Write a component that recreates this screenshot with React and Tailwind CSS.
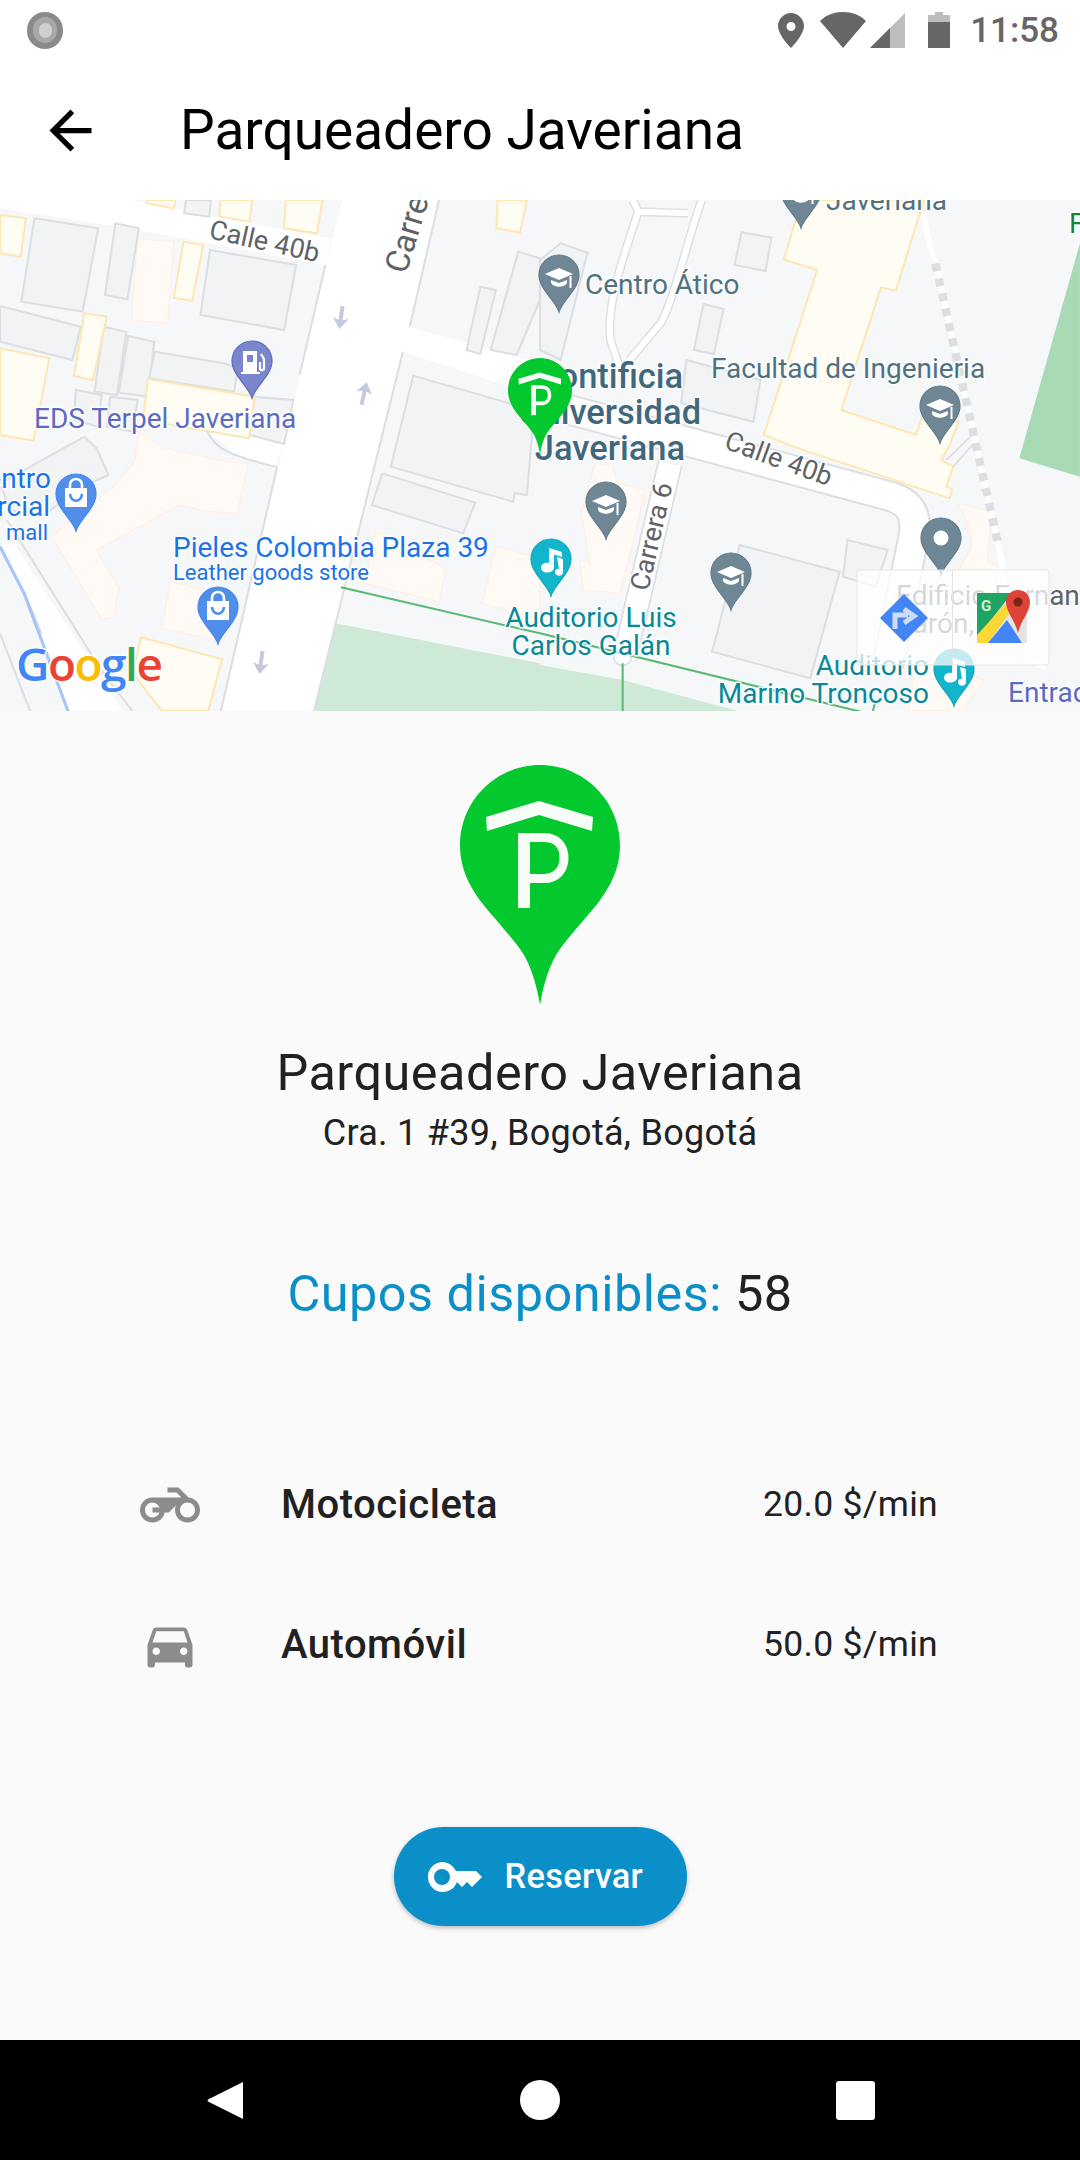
import React from "react";

const BLD = { fill: "#f1f3f5", stroke: "#dcdee1", strokeWidth: 6 };
const YEL = { fill: "#fffcf3", stroke: "#fde7b2", strokeWidth: 6 };
const PEA = { fill: "#fffaf5", stroke: "#fff0e2", strokeWidth: 4 };

const leftBld = ["100,55 285,85 240,335 62,305","335,70 403,85 370,298 305,285","0,318 235,380 210,480 0,425","610,150 860,195 825,390 582,345","300,380 367,395 340,585 275,575","372,408 448,425 430,590 345,578","450,455 650,490 690,505 680,575 433,535","220,570 295,585 285,680 215,660","320,590 400,600 385,695 310,680","1505,155 1568,175 1568,300 1500,465 1425,450","1395,260 1440,270 1395,462 1355,450","1200,527 1480,610 1550,640 1530,885 1495,880 1490,905 1135,800","1110,820 1380,908 1345,1000 1080,915","540,0 612,0 608,50 535,40","0,850 245,710 280,745 300,790 315,825 240,860 120,950 30,930","730,590 852,600 825,732 725,705"];
const leftYel = ["0,45 75,55 60,170 0,160","430,0 510,0 505,25 425,10","640,0 732,0 725,65 637,50","830,0 937,0 920,100 825,85","245,340 310,350 270,540 215,528","533,125 590,135 558,303 505,293","0,445 143,475 97,722 0,705","430,537 740,590 723,715 415,660","1445,0 1530,0 1510,98 1442,85","410,1312 645,1378 605,1532 470,1532 385,1420"];
const leftPea = ["400,115 505,125 487,370 382,360","405,700 480,745 655,785 720,790 690,940 605,935 520,915 280,1050 345,1165 330,1250 295,1258 150,1010 330,860 390,785","495,1145 680,1190 650,1325 470,1285","1090,995 1295,1105 1275,1205 1060,1150","1440,1040 1568,1075 1568,1255 1400,1210"];

const rightBld = ["60,130 138,158 60,480 0,450 0,180","475,312 533,327 505,462 447,450","585,97 672,113 655,213 565,195","425,480 640,540 620,665 410,610","580,1035 870,1115 785,1435 500,1355","893,1020 1010,1050 975,1160 880,1130"];
const rightYel = ["760,0 1115,0 1033,272 990,262 875,630 1092,705 1110,650 1215,665 1190,735 1165,780 1200,800 1180,860 1197,870 1190,895 750,745 650,705 805,210 708,178"];
const rightPea = ["160,790 210,800 225,850 305,870 265,1050 230,1180 125,1170 115,1080 145,1090 120,940","1215,910 1310,935 1300,1090 1325,1095 1320,1200 1210,1120 1255,1040 1250,990","1090,1380 1290,1440 1230,1532 1070,1532"];

function Poly({ list, style }) {
  return list.map((p, i) => <polygon key={i} points={p} {...style} strokeLinejoin="miter" />);
}

function Arrow({ x, y, r }) {
  return (
    <g transform={`translate(${x} ${y}) rotate(${r})`}>
      <path d="M-2 -11 L2 -11 L2 3 L8 1 L0 12 L-8 1 L-2 3 Z" fill="#c5c9df" />
    </g>
  );
}

const icons = {
  cap: (
    <g fill="#fff">
      <path d="M0 13 L-14 19 L0 25 L14 19 Z" />
      <path d="M-8 25 V28 C-5 33 5 33 8 28 V25 L0 28 Z" />
      <rect x="10.5" y="21" width="2" height="12" />
    </g>
  ),
  bag: (
    <g>
      <path d="M-11 14 H11 L11 33 H-11 Z" fill="#fff" />
      <path d="M-6 14 V11 C-6 3 6 3 6 11 V14" fill="none" stroke="#fff" strokeWidth="2.6" />
      <path d="M-6 20 C-5 29 5 29 6 20" fill="none" stroke="#4f8ee9" strokeWidth="2.6" />
    </g>
  ),
  fuel: (
    <g fill="#fff">
      <path d="M-9 10 H5 V31 H8 V33 H-11 V31 H-9 Z M-5 14 V21 H1 V14 Z" fillRule="evenodd" />
      <path d="M9 13 L12 18 V27 C12 30 8 30 8 27 V22 H7" fill="none" stroke="#fff" strokeWidth="2.2" />
    </g>
  ),
  music: (
    <g fill="#fff">
      <path d="M-2 9 L11 13 V18 L3 15.5 V29 C3 34 -9 36 -10 29 C-10 24 -5 23 -2 24 Z" />
      <path d="M6 18 L12 20 V33 C12 38 4 38 4 33 C4 30 7 29 8 30 Z" />
    </g>
  ),
  dot: <circle cx="0" cy="20" r="7.5" fill="#fff" />,
};

function Pin({ x, y, color, edge, icon }) {
  return (
    <g transform={`translate(${x} ${y})`}>
      <path d="M0 57 C-3 46 -20 34 -20 20 A20 20 0 1 1 20 20 C20 34 3 46 0 57 Z" fill={color} stroke={edge} strokeWidth="1.2" />
      {icons[icon]}
    </g>
  );
}

function L({ x, y, size = 28, color, weight = 400, anchor = "start", rot, children }) {
  return (
    <text
      x={x}
      y={y}
      fontSize={size}
      fontWeight={weight}
      fontFamily="Roboto, sans-serif"
      fill={color}
      textAnchor={anchor}
      stroke="#ffffff"
      strokeWidth="3"
      strokeOpacity="0.85"
      paintOrder="stroke"
      transform={rot !== undefined ? `rotate(${rot} ${x} ${y})` : undefined}
    >
      {children}
    </text>
  );
}

function PinShape() {
  return (
    <>
      <path d="M80 0 C124 0 160 36 160 80 C160 104 150 122 138 138 C122 158 106 174 96 190 C88 204 83 222 80 240 C77 222 72 204 64 190 C54 174 38 158 22 138 C10 122 0 104 0 80 C0 36 36 0 80 0 Z" fill="#04c92e" />
      <path d="M26 52 L79 36 L133 52 L132 66 L79 50 L27 66 Z" fill="#f6fcf6" />
      <path d="M58 68 H70 V143 H58 Z" fill="#f6fcf6" />
      <path d="M64 72.5 H84 C98 72.5 104 82 104 93 C104 104 97 113.5 84 113.5 H64" fill="none" stroke="#f6fcf6" strokeWidth="9" />
    </>
  );
}

function MapView() {
  const slate = "#6f8795";
  const slateEdge = "#5f7a89";
  const labelSlate = "#4f7282";
  const teal = "#078a96";
  const purple = "#5c6bc0";
  const blue = "#1a73e8";
  const road = "#5f6368";
  return (
    <svg viewBox="0 0 1080 511" className="block w-[1080px] h-[511px] bg-[#f5f7f9]">
      <g transform="scale(0.34435 0.33333)">
        <polygon points="975,1270 1568,1390 1568,1540 910,1540" fill="#ceead6" />
        <Poly list={leftPea} style={PEA} />
        <polygon points="0,0 380,0 960,115 945,195 400,90 0,25" fill="#fff" />
        <polygon points="995,0 1275,0 1190,380 1568,490 1568,590 1170,455 910,1540 640,1540 870,530 945,195" fill="#fff" />
        <polygon points="720,700 830,730 870,530 890,540 800,800 680,760 610,700" fill="#fff" />
        <polygon points="5,1030 40,1030 360,1540 205,1540 70,1180" fill="#fff" />
        <Poly list={leftBld} style={BLD} />
        <Poly list={leftYel} style={YEL} />
        <path d="M945 195 L870 525 M1275 0 L1190 380 M1170 455 L910 1540 M805 800 L640 1540 M600 690 C630 760 690 770 805 802" fill="none" stroke="#dcdee1" strokeWidth="6" />
        <path d="M20 960 L300 1420 L390 1540 M0 1040 L80 1200 L120 1300 M0 1300 L90 1540" fill="none" stroke="#dcdee1" strokeWidth="6" />
        <path d="M0 1040 L70 1180 L200 1540" fill="none" stroke="#a6c5fa" strokeWidth="9" />
        <path d="M990 1162 L1568 1300" stroke="#5bb974" strokeWidth="6" fill="none" />
      </g>
      <g transform="translate(540 0) scale(0.34435 0.33333)">
        <polygon points="0,1395 240,1440 600,1540 0,1540" fill="#ceead6" />
        <polygon points="1568,130 1392,775 1568,830" fill="#a8dab5" />
        <Poly list={rightPea} style={PEA} />
        <path d="M-20 600 L1020 890 C1080 910 1095 950 1085 1010 L1010 1400" fill="none" stroke="#dcdee1" strokeWidth="94" />
        <path d="M-20 600 L1020 890 C1080 910 1095 950 1085 1010 L1010 1400" fill="none" stroke="#fff" strokeWidth="82" />
        <path d="M378 790 L245 1375" fill="none" stroke="#dcdee1" strokeWidth="74" />
        <path d="M378 790 L245 1375" fill="none" stroke="#fff" strokeWidth="64" />
        <circle cx="240" cy="1370" r="26" fill="#fff" stroke="#dcdee1" strokeWidth="5" />
        <path d="M270 0 L285 35 L430 40 M285 35 C250 150 190 310 205 420 L230 500 M470 0 C430 110 390 300 350 370 L260 480" fill="none" stroke="#dcdee1" strokeWidth="26" />
        <path d="M270 0 L285 35 L430 40 M285 35 C250 150 190 310 205 420 L230 500 M470 0 C430 110 390 300 350 370 L260 480" fill="none" stroke="#fff" strokeWidth="18" />
        <Poly list={rightBld} style={BLD} />
        <Poly list={rightYel} style={YEL} />
        <path d="M1115 40 C1120 100 1135 150 1150 190 L1330 1030 C1350 1120 1360 1240 1350 1290 C1370 1350 1420 1390 1470 1400" fill="none" stroke="#fff" strokeWidth="16" />
        <path d="M1148 190 L1330 1030" fill="none" stroke="#dcdee1" strokeWidth="24" strokeDasharray="24 22" />
        <path d="M1200 800 L1260 730 M1180 780 L1250 710" stroke="#dcdee1" strokeWidth="5" fill="none" />
        <path d="M0 1300 L950 1540" stroke="#5bb974" strokeWidth="6" fill="none" />
        <path d="M240 1390 L240 1540 M975 1500 L965 1540" stroke="#5bb974" strokeWidth="6" fill="none" />
      </g>

      <Arrow x={341} y={117} r={8} />
      <Arrow x={364} y={194} r={193} />
      <Arrow x={261} y={462} r={8} />

      <L x={208} y={38} size={27} color={road} rot={12.5}>Calle 40b</L>
      <L x={406} y={75} size={33} color={road} rot={-73}>Carrera 6</L>
      <L x={34} y={228} color={purple}>EDS Terpel Javeriana</L>
      <L x={51} y={288} color={blue} anchor="end">Centro</L>
      <L x={50} y={316} color={blue} anchor="end">Comercial</L>
      <L x={48} y={340} size={22} color={blue} anchor="end">mall</L>
      <L x={173} y={357} color={blue}>Pieles Colombia Plaza 39</L>
      <L x={173} y={380} size={22} color={blue}>Leather goods store</L>
      <L x={585} y={94} color={labelSlate}>Centro Ático</L>
      <L x={826} y={10} color={labelSlate}>Javeriana</L>
      <L x={711} y={178} color={labelSlate}>Facultad de Ingenieria</L>
      <L x={610} y={188} size={34.5} weight={500} color="#40687c" anchor="middle">Pontificia</L>
      <L x={610} y={224} size={34.5} weight={500} color="#40687c" anchor="middle">Universidad</L>
      <L x={610} y={260} size={34.5} weight={500} color="#40687c" anchor="middle">Javeriana</L>
      <L x={723} y={248} size={27} color={road} rot={20}>Calle 40b</L>
      <L x={648} y={392} size={27} color={road} rot={-77}>Carrera 6</L>
      <L x={591} y={427} color={teal} anchor="middle">Auditorio Luis</L>
      <L x={591} y={455} color={teal} anchor="middle">Carlos Galán</L>
      <L x={929} y={475} color={teal} anchor="end">Auditorio</L>
      <L x={929} y={503} color={teal} anchor="end">Marino Troncoso</L>
      <L x={896} y={405} color={road}>Edificio Fernando</L>
      <L x={974} y={433} color={road} anchor="end">Barón,</L>
      <L x={1008} y={502} color={purple}>Entrada</L>
      <L x={1069} y={33} color="#188038">Facultad</L>

      <Pin x={252} y={141} color="#7986cb" edge="#5c6bc0" icon="fuel" />
      <Pin x={76} y={274} color="#4f8ee9" edge="#4285f4" icon="bag" />
      <Pin x={218} y={387} color="#4f8ee9" edge="#4285f4" icon="bag" />
      <Pin x={559} y={55} color={slate} edge={slateEdge} icon="cap" />
      <Pin x={801} y={-29} color={slate} edge={slateEdge} icon="cap" />
      <Pin x={940} y={186} color={slate} edge={slateEdge} icon="cap" />
      <Pin x={606} y={282} color={slate} edge={slateEdge} icon="cap" />
      <Pin x={731} y={353} color={slate} edge={slateEdge} icon="cap" />
      <Pin x={941} y={318} color={slate} edge={slateEdge} icon="dot" />
      <Pin x={551} y={339} color="#12b5cb" edge="#12a5bb" icon="music" />
      <Pin x={954} y={449} color="#12b5cb" edge="#12a5bb" icon="music" />

      <g transform="translate(508 158) scale(0.4)">
        <PinShape />
      </g>

      <text x="16" y="481" fontSize="46" fontWeight="600" fontFamily="'Open Sans', sans-serif" stroke="#fff" strokeWidth="3" paintOrder="stroke" letterSpacing="-1.5">
        <tspan fill="#4285f4">G</tspan>
        <tspan fill="#ea4335">o</tspan>
        <tspan fill="#fbbc05">o</tspan>
        <tspan fill="#4285f4">g</tspan>
        <tspan fill="#34a853">l</tspan>
        <tspan fill="#ea4335">e</tspan>
      </text>

      <rect x="857" y="370" width="192" height="95" rx="3" fill="#ffffff" fillOpacity="0.75" stroke="#e6e6e6" strokeWidth="1" />
      <path d="M952.5 370 V465" stroke="#e4e4e4" strokeWidth="1" />
      <path d="M904 394 L928 418 L904 442 L880 418 Z" fill="#4285f4" />
      <path d="M895 429 V415 H908 M904 409 L914 416 L904 423" fill="none" stroke="#cfdcf8" strokeWidth="5" />
      <g>
        <path d="M977 393 H1018 L1027 401 V443 H977 Z" fill="#e4e4e4" />
        <path d="M977 393 H1012 L977 438 Z" fill="#1fa463" />
        <path d="M977 443 V435 L1009 400 L1013 408 L988 443 Z" fill="#fdd835" />
        <path d="M988 443 L1007 420 L1022 443 Z" fill="#4285f4" />
        <path d="M1018 390 C1028 390 1030 399 1030 402 C1030 412 1021 420 1018 433 C1015 420 1006 412 1006 402 C1006 395 1011 390 1018 390 Z" fill="#db4437" />
        <circle cx="1018" cy="402" r="4.5" fill="#7b241c" />
        <text x="981" y="411" fontSize="15" fontWeight="700" fontFamily="Roboto, sans-serif" fill="#d5efe0">G</text>
      </g>
    </svg>
  );
}

function Row({ icon, name, price }) {
  return (
    <div className="flex items-center w-full h-[63px] pl-[140px]">
      <div className="w-[60px] h-[63px] shrink-0 flex items-center">{icon}</div>
      <div className="ml-[81px] w-[482px] text-[40px] font-medium text-[#212121] tracking-[0.5px]">{name}</div>
      <div className="text-[35.5px] text-[#212121] tracking-[0.3px] whitespace-nowrap">{price}</div>
    </div>
  );
}

export default function App() {
  return (
    <div className="w-[1080px] h-[2160px] flex flex-col bg-[#fafafa] font-['Roboto',sans-serif] overflow-hidden">
      <div className="h-[60px] bg-white flex items-center pl-[27px] pr-[21px] shrink-0">
        <div className="w-[36px] h-[37px] rounded-full bg-[#8a8a8a] flex items-center justify-center">
          <div className="w-[24px] h-[26px] rounded-full bg-[#a8a8a8] flex items-center justify-center">
            <div className="w-[13px] h-[15px] rounded-full bg-[#cfcfcf]" />
          </div>
        </div>
        <div className="ml-auto flex items-center">
          <svg viewBox="0 0 26 35" className="w-[26px] h-[35px]">
            <path fillRule="evenodd" d="M13 0 C6 0 0 6 0 13 C0 22 13 35 13 35 C13 35 26 22 26 13 C26 6 20 0 13 0 Z M13 9 A4.5 4.5 0 1 1 13 18 A4.5 4.5 0 1 1 13 9 Z" fill="#666666" />
          </svg>
          <svg viewBox="0 0 46 36" className="w-[46px] h-[36px] ml-[16px]">
            <path d="M0 9 C6 3 14 0 23 0 C32 0 40 3 46 9 L23 36 Z" fill="#666666" />
          </svg>
          <svg viewBox="0 0 35 35" className="w-[35px] h-[35px] ml-[4px]">
            <path d="M35 0 V35 H0 Z" fill="#bdbdbd" />
            <path d="M20 15 V35 H0 Z" fill="#666666" />
          </svg>
          <svg viewBox="0 0 22 36" className="w-[22px] h-[36px] ml-[23px]">
            <path d="M7 0 H15 V3 H22 V36 H0 V3 H7 Z" fill="#bdbdbd" />
            <path d="M0 10 H22 V36 H0 Z" fill="#666666" />
          </svg>
          <span className="ml-[20px] text-[35px] font-medium text-[#666666] leading-none">11:58</span>
        </div>
      </div>

      <div className="h-[140px] bg-white flex items-center shrink-0">
        <svg viewBox="0 0 24 24" className="w-[63px] h-[63px] ml-[39px] shrink-0">
          <path d="M20 11H7.83l5.59-5.59L12 4l-8 8 8 8 1.41-1.41L7.83 13H20v-2z" fill="#000" />
        </svg>
        <div className="ml-[78px] text-[55px] text-black leading-none whitespace-nowrap">Parqueadero Javeriana</div>
      </div>

      <div className="h-[511px] shrink-0 overflow-hidden">
        <MapView />
      </div>

      <div className="flex-1 flex flex-col items-center">
        <GreenPin />
        <div className="mt-[36px] text-[50.4px] leading-[64px] text-[#212121] tracking-[0.5px] whitespace-nowrap">Parqueadero Javeriana</div>
        <div className="mt-[6px] text-[36px] leading-[44px] text-[#212121] tracking-[0.3px] whitespace-nowrap">Cra. 1 #39, Bogotá, Bogotá</div>
        <div className="mt-[107px] text-[50.4px] leading-[64px] tracking-[0.5px] whitespace-nowrap">
          <span className="text-[#0b8fc9]">Cupos disponibles: </span>
          <span className="text-[#212121]">58</span>
        </div>
        <div className="mt-[147px] w-full flex flex-col gap-[77px]">
          <Row
            name="Motocicleta"
            price="20.0 $/min"
            icon={
              <svg viewBox="0 0 24 24" className="w-[60px] h-[60px]">
                <path d="M19.44 9.03L15.41 5H11v2h3.59l2 2H5c-2.8 0-5 2.2-5 5s2.2 5 5 5c2.46 0 4.45-1.69 4.9-4h1.65l2.77-2.77c-.21.54-.32 1.14-.32 1.77 0 2.8 2.2 5 5 5s5-2.2 5-5c0-2.65-1.97-4.77-4.56-4.97zM7.82 15C7.4 16.15 6.28 17 5 17c-1.63 0-3-1.37-3-3s1.37-3 3-3c1.28 0 2.4.85 2.82 2H5v2h2.82zM19 17c-1.66 0-3-1.34-3-3s1.34-3 3-3 3 1.34 3 3-1.34 3-3 3z" fill="#8c8c8c" />
              </svg>
            }
          />
          <Row
            name="Automóvil"
            price="50.0 $/min"
            icon={
              <svg viewBox="0 0 24 24" className="w-[60px] h-[60px]">
                <path d="M18.92 6.01C18.72 5.42 18.16 5 17.5 5h-11c-.66 0-1.21.42-1.42 1.01L3 12v8c0 .55.45 1 1 1h1c.55 0 1-.45 1-1v-1h12v1c0 .55.45 1 1 1h1c.55 0 1-.45 1-1v-8l-2.08-5.99zM6.5 16c-.83 0-1.5-.67-1.5-1.5S5.67 13 6.5 13s1.5.67 1.5 1.5S7.33 16 6.5 16zm11 0c-.83 0-1.5-.67-1.5-1.5s.67-1.5 1.5-1.5 1.5.67 1.5 1.5-.67 1.5-1.5 1.5zM5 11l1.5-4.5h11L19 11H5z" fill="#8c8c8c" />
              </svg>
            }
          />
        </div>
        <div className="mt-[151px] w-[293px] h-[99px] rounded-full bg-[#0b8fc9] shadow-[0_2px_5px_rgba(0,0,0,0.25)] flex items-center pl-[33px]">
          <svg viewBox="0 0 55 30" className="w-[55px] h-[30px] shrink-0">
            <path fillRule="evenodd" d="M15 0 A15 15 0 0 1 29 9 H49 L55 15 L45 25 L40 20 L35 25 L30 20 A15 15 0 1 1 15 0 Z M15 7 A8 8 0 1 0 15 23 A8 8 0 1 0 15 7 Z" fill="#ffffff" />
          </svg>
          <span className="ml-[23px] text-[34.4px] font-medium text-white tracking-[0.3px] whitespace-nowrap">Reservar</span>
        </div>
      </div>

      <div className="h-[120px] bg-black shrink-0 flex items-center">
        <svg viewBox="0 0 37 39" className="w-[37px] h-[39px] ml-[207px]">
          <path d="M36 1 V38 L2 21 C0 20 0 19 2 18 Z" fill="#fff" />
        </svg>
        <div className="w-[40px] h-[40px] rounded-full bg-white ml-[276px]" />
        <div className="w-[39px] h-[39px] rounded-[3px] bg-white ml-[276px]" />
      </div>
    </div>
  );
}

function GreenPin() {
  return (
    <svg viewBox="0 0 160 240" className="w-[160px] h-[240px] mt-[54px] shrink-0">
      <PinShape />
    </svg>
  );
}
